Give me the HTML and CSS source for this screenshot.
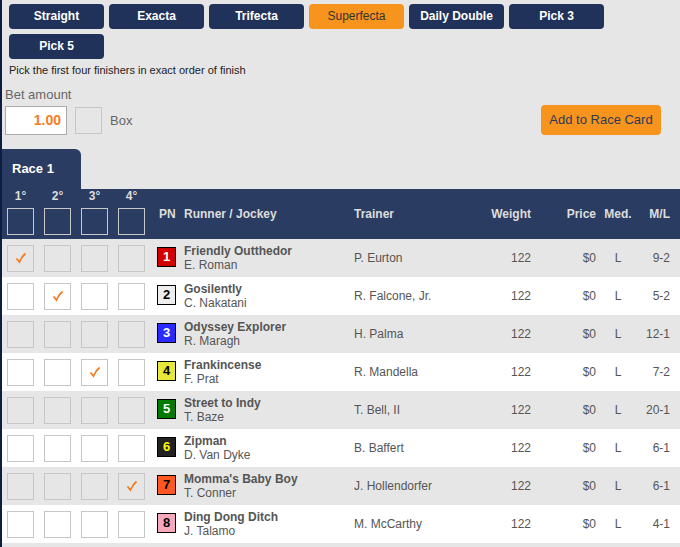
FILE: index.html
```html
<!DOCTYPE html>
<html>

<head lang="en">
    <meta charset="UTF-8">
    <title>Race Card</title>
    <link rel="stylesheet" href="styles.css">
</head>

<body>
    <div class="page">

        <div class="bet-panel">
            <div class="bet-types">
                <a href="javascript:void(0);" class="bet-type">Straight</a>
                <a href="javascript:void(0);" class="bet-type">Exacta</a>
                <a href="javascript:void(0);" class="bet-type">Trifecta</a>
                <a href="javascript:void(0);" class="bet-type active">Superfecta</a>
                <a href="javascript:void(0);" class="bet-type">Daily Double</a>
                <a href="javascript:void(0);" class="bet-type">Pick 3</a>
                <a href="javascript:void(0);" class="bet-type">Pick 5</a>
            </div>
            <p class="bet-desc">Pick the first four finishers in exact order of finish</p>

            <div class="amount-title">Bet amount</div>
            <div class="amount-row">
                <input type="text" class="amount-input" value="1.00">
                <span class="check-box"></span>
                <label class="box-label">Box</label>
                <a href="javascript:void(0);" class="add-card">Add to Race Card</a>
            </div>
        </div>

        <div class="race-tab">Race 1</div>

        <div class="race-table">
            <div class="race-head">
                <div class="pos-cell"><span class="pos-num">1°</span><span class="check-box"></span></div>
                <div class="pos-cell"><span class="pos-num">2°</span><span class="check-box"></span></div>
                <div class="pos-cell"><span class="pos-num">3°</span><span class="check-box"></span></div>
                <div class="pos-cell"><span class="pos-num">4°</span><span class="check-box"></span></div>
                <div class="col-pn">PN</div>
                <div>Runner / Jockey</div>
                <div>Trainer</div>
                <div class="col-right">Weight</div>
                <div class="col-right">Price</div>
                <div class="col-center">Med.</div>
                <div class="col-right">M/L</div>
            </div>
        </div>
    </div>

    <script>
        // runners: pn, name, jockey, trainer, ml, selected position (0 = none)
        var runners = [
            [1, 'Friendly Outthedor', 'E. Roman', 'P. Eurton', '9-2', 1],
            [2, 'Gosilently', 'C. Nakatani', 'R. Falcone, Jr.', '5-2', 2],
            [3, 'Odyssey Explorer', 'R. Maragh', 'H. Palma', '12-1', 0],
            [4, 'Frankincense', 'F. Prat', 'R. Mandella', '7-2', 3],
            [5, 'Street to Indy', 'T. Baze', 'T. Bell, II', '20-1', 0],
            [6, 'Zipman', 'D. Van Dyke', 'B. Baffert', '6-1', 0],
            [7, "Momma's Baby Boy", 'T. Conner', 'J. Hollendorfer', '6-1', 4],
            [8, 'Ding Dong Ditch', 'J. Talamo', 'M. McCarthy', '4-1', 0],
            [9, '', '', '', '', 0]
        ];

        var tick = '<svg width="12" height="12" viewBox="0 0 12 12"><path d="M1.5 6.5 L4.5 10 C6 6.5 8 3.5 10.5 1.5" fill="none" stroke="#f57c1f" stroke-width="1.8"/></svg>';

        var table = document.querySelector('.race-table');
        var html = '';
        for (var i = 0; i < runners.length; i++) {
            var r = runners[i];
            html += '<div class="race-row">';
            for (var p = 1; p <= 4; p++) {
                html += '<div class="pos-cell"><span class="check-box">' + (r[5] == p ? tick : '') + '</span></div>';
            }
            if (r[1]) {
                html += '<div class="col-pn"><span class="pn pn-' + r[0] + '">' + r[0] + '</span></div>';
                html += '<div class="runner"><div class="runner-name">' + r[1] + '</div><div>' + r[2] + '</div></div>';
                html += '<div>' + r[3] + '</div>';
                html += '<div class="col-right">122</div>';
                html += '<div class="col-right">$0</div>';
                html += '<div class="col-center">L</div>';
                html += '<div class="col-right">' + r[4] + '</div>';
            }
            html += '</div>';
        }
        table.innerHTML += html;
    </script>
</body>

</html>
```

FILE: styles.css
```css
html,
body,
div,
p,
span,
a {
    padding: 0px;
    margin: 0px;
}

body {
    background: #e6e6e6;
    font-family: "Liberation Sans", Arial, sans-serif;
    color: #555;
}

a {
    text-decoration: none;
}

.page {
    min-height: 100vh;
    border-left: 2px solid #0e1d42;
    overflow: hidden;
}

.bet-panel {
    padding: 4px 19px 0px 3px;
}

.bet-types {
    display: flex;
    flex-wrap: wrap;
    gap: 5px;
    margin-left: 4px;
}

.bet-type {
    width: 95px;
    height: 25px;
    line-height: 25px;
    text-align: center;
    font-size: 12px;
    font-weight: bold;
    color: #ffffff;
    background: #21325a;
    border-radius: 4px;
}

.bet-type.active {
    background: #f7941d;
    color: #333333;
    font-weight: normal;
}

.bet-desc {
    margin: 4px 0px 0px 4px;
    font-size: 11px;
    line-height: 14px;
    color: #222222;
}

.amount-title {
    margin-top: 10px;
    font-size: 13px;
    line-height: 16px;
    color: #666666;
}

.amount-row {
    display: flex;
    align-items: center;
    margin-top: 2px;
}

.amount-input {
    box-sizing: border-box;
    width: 62px;
    height: 29px;
    border: 1px solid #aaaaaa;
    background: #ffffff;
    padding: 0px 5px 0px 0px;
    text-align: right;
    font-family: "Liberation Sans", Arial, sans-serif;
    font-size: 14px;
    font-weight: bold;
    color: #f57c1f;
    outline: none;
}

.check-box {
    box-sizing: border-box;
    display: flex;
    align-items: center;
    justify-content: center;
    width: 27px;
    height: 27px;
    border: 1px solid #c6c6c6;
}

.amount-row .check-box {
    margin-left: 8px;
}

.box-label {
    margin-left: 8px;
    font-size: 13px;
    color: #666666;
}

.add-card {
    margin-left: auto;
    width: 120px;
    height: 30px;
    line-height: 30px;
    text-align: center;
    font-size: 13px;
    color: #2e3a55;
    background: #f7941d;
    border-radius: 4px;
}

.race-tab {
    margin-top: 14px;
    width: 69px;
    height: 40px;
    line-height: 40px;
    padding-left: 10px;
    font-size: 13px;
    font-weight: bold;
    color: #ffffff;
    background: #2b3c62;
    border-radius: 0px 6px 0px 0px;
}

.race-head,
.race-row {
    display: grid;
    grid-template-columns: 37px 37px 37px 39px 27px 170px 117px 60px 65px 44px 30px;
    padding: 0px 10px 0px 5px;
    font-size: 12px;
}

.race-head {
    height: 50px;
    align-items: center;
    background: #2b3c62;
    color: #dddddd;
    font-weight: bold;
}

.race-head .pos-cell {
    align-self: start;
}

.pos-num {
    display: block;
    width: 27px;
    text-align: center;
    line-height: 14px;
    margin-bottom: 5px;
}

.race-head .check-box {
    border-color: #c8c8c8;
}

.race-head .col-pn {
    padding-left: 2px;
}

.race-row {
    height: 38px;
    align-items: center;
}

.race-row:nth-child(odd) {
    background: #ffffff;
}

.race-row:nth-child(odd) .check-box {
    background: #ffffff;
}

.col-right {
    text-align: right;
}

.col-center {
    text-align: center;
}

.runner {
    line-height: 14px;
}

.runner-name {
    font-weight: bold;
}

.pn {
    box-sizing: border-box;
    display: block;
    width: 19px;
    height: 20px;
    line-height: 18px;
    margin-bottom: 2px;
    text-align: center;
    font-size: 13px;
    font-weight: bold;
    border: 1px solid #000000;
    color: #ffffff;
}

.pn-1 {
    background: #d00000;
}

.pn-2 {
    background: #eeeeee;
    color: #000000;
}

.pn-3 {
    background: #2a2aff;
}

.pn-4 {
    background: #e8e83a;
    color: #000000;
}

.pn-5 {
    background: #007a00;
}

.pn-6 {
    background: #222222;
    color: #ffff00;
}

.pn-7 {
    background: #ff5722;
    color: #000000;
}

.pn-8 {
    background: #f8a8bc;
    color: #000000;
}
```
